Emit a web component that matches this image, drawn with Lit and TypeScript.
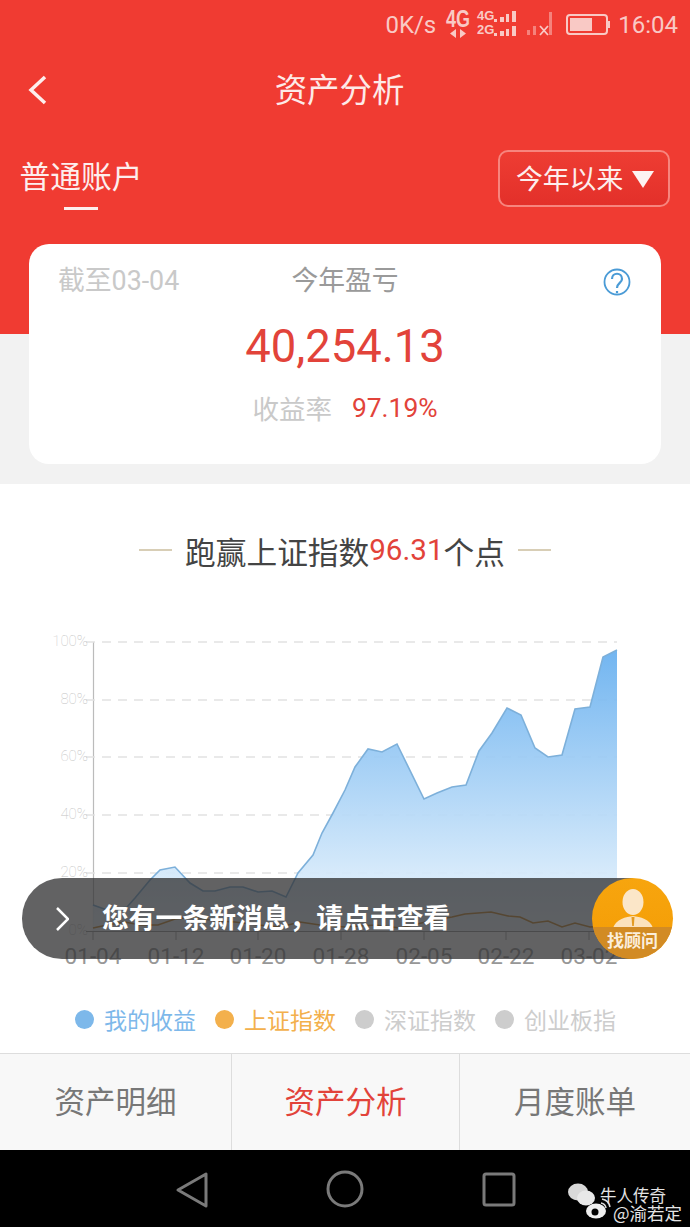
import { LitElement, html, css, svg } from "lit";
import { customElement } from "lit/decorators.js";

const BLUE: [number, number][] = [[93,905],[107,910],[127,907],[135,898],[150,880],[160,870],[175,867],[190,883],[203,891],[215,891],[230,887],[243,887],[258,892],[272,891],[286,897],[298,873],[313,855],[322,833],[333,813],[345,790],[355,767],[368,749],[382,752],[397,744],[424,799],[437,793],[452,787],[466,785],[479,751],[492,733],[507,708],[521,715],[535,748],[548,757],[562,755],[575,709],[590,707],[603,657],[617,650]];
const ORANGE: [number, number][] = [[93,928],[107,925],[125,922],[140,925],[158,925],[175,919],[195,917],[215,921],[235,922],[258,925],[280,927],[300,922],[320,925],[345,927],[375,925],[400,928],[430,921],[452,917],[465,914],[491,912],[508,916],[520,917],[533,923],[548,921],[562,927],[575,923],[590,927],[617,925]];
const pts = (p: [number, number][]) => p.map((q) => q.join(",")).join(" ");
const GRID = [[642,"100%"],[700,"80%"],[757,"60%"],[815,"40%"],[873,"20%"],[931,"0%"]] as [number,string][];
const XT = [[93,"01-04"],[176,"01-12"],[258,"01-20"],[341,"01-28"],[424,"02-05"],[506,"02-22"],[589,"03-02"]] as [number,string][];

@customElement("app-root")
export class AppRoot extends LitElement {
  static styles = css`
    :host { display: block; width: 690px; height: 1227px; overflow: hidden; background: #fff;
      font-family: "Noto Sans CJK SC", "Roboto", sans-serif; }
    .top { height: 484px; background: linear-gradient(#f03b32 334px, #f2f2f2 334px); display: flex; flex-direction: column; }
    .status { height: 50px; display: flex; justify-content: flex-end; align-items: center; padding-right: 12px;
      color: #f9c9c5; font: 24px Roboto, sans-serif; }
    .status span { line-height: 50px; }
    .status svg { display: block; margin: 0 4px 0 5px; }
    .nav { height: 80px; box-sizing: border-box; padding: 0 11px 4px 0; display: flex; align-items: center; justify-content: center; position: relative; color: #fdeae8; font-size: 32.4px; line-height: 76px; }
    .nav svg { position: absolute; left: 28px; top: 24px; }
    .tabs { height: 114px; display: flex; justify-content: space-between; padding: 0 20px 0 20px; box-sizing: border-box; }
    .tab { color: #fdeeed; font-size: 30.8px; line-height: 44px; margin-top: 23px; display: flex; flex-direction: column; align-items: center; width: 122px; height: 60px; white-space: nowrap; }
    .tab i { display: block; width: 34px; height: 3px; background: #fdeeed; margin-top: 10px; }
    .range { width: 172px; height: 57px; margin-top: 20px; box-sizing: border-box; border: 2px solid #f7857e; border-radius: 10px;
      background: linear-gradient(#ee3d33, #e3302a); color: #fdeeed; font-size: 26.8px; display: flex; align-items: center; padding: 0 0 2px 16px; gap: 9px; white-space: nowrap; }
    .range svg { display: block; margin-top: 4px; }
    .card { margin: 0 29px; height: 220px; box-sizing: border-box; background: #fff; border-radius: 20px; padding: 16px 29px 0; display: flex; flex-direction: column; align-items: center; }
    .row1 { width: 100%; position: relative; display: flex; justify-content: center; height: 40px; line-height: 38px; }
    .date { position: absolute; left: 0; color: #c9c9c9; font-size: 26.8px; white-space: nowrap; }
    .date b { font: 26.8px Roboto, sans-serif; }
    .label { color: #9a9a9a; font-size: 26.8px; }
    .q { position: absolute; right: 0; top: 8px; }
    .amount { font: 45.4px Roboto, sans-serif; color: #e2433a; line-height: 56px; margin-top: 19px; }
    .rate { display: flex; align-items: center; gap: 20px; margin-top: 13px; line-height: 40px; }
    .rate span { color: #c9c9c9; font-size: 26.5px; }
    .rate b { font: 26.4px Roboto, sans-serif; color: #e2433a; }
    .main { height: 569px; position: relative; display: flex; flex-direction: column; }
    .heading { height: 136px; display: flex; justify-content: center; align-items: center; gap: 13px; font-size: 30.7px; color: #444; box-sizing: border-box; white-space: nowrap; padding-bottom: 4px; }
    .heading i { display: block; width: 33px; height: 2px; background: #d8ceb6; }
    .heading em { font: 29.6px Roboto, sans-serif; color: #e2433a; }
    .heading div { display: flex; align-items: center; }
    .chart { display: block; }
    .toast { position: absolute; left: 22px; top: 394px; width: 610px; height: 81px; border-radius: 40px 0 0 40px; background: rgba(48,48,50,.76);
      display: flex; align-items: center; color: #fff; font-size: 26.8px; font-weight: 700; padding-left: 33px; box-sizing: border-box; gap: 33px; white-space: nowrap; }
    .toast span { margin-top: -5px; }
    .advisor { position: absolute; left: 592px; top: 394px; width: 81px; height: 81px; border-radius: 50%; background: linear-gradient(#f7a50e, #f49c05); overflow: hidden; }
    .advisor svg { display: block; position: absolute; left: 0; top: 0; }
    .advisor span { position: absolute; left: 0; right: 0; bottom: 0; height: 32px; background: #d28b24; color: #fbeedb; font-size: 17px; font-weight: 700; text-align: center; line-height: 26px; white-space: nowrap; }
    .legend { display: flex; position: absolute; left: 75px; top: 518px; gap: 19px; font-size: 23px; line-height: 34px; white-space: nowrap; }
    .legend div { display: flex; align-items: center; gap: 10px; }
    .legend i { display: block; width: 19px; height: 19px; border-radius: 50%; background: currentColor; flex: none; }
    .bottom { height: 97px; box-sizing: border-box; border-top: 1px solid #ddd; background: #f8f8f8; display: grid; grid-template-columns: 232px 228px 230px; }
    .bottom div { display: flex; align-items: center; justify-content: center; font-size: 30.5px; color: #777; border-right: 1px solid #ddd; padding-bottom: 4px; }
    .bottom div:last-child { border-right: 0; }
    .bottom .on { color: #e2433a; }
    .sys { height: 77px; background: #000; position: relative; display: flex; }
    .sys > svg { display: block; }
    .wm { position: absolute; left: 600px; top: 37px; color: #e4e4e4; font-size: 16.5px; line-height: 17px; white-space: nowrap; }
    .wm div:last-child { margin-left: 13px; font-size: 17.5px; }
  `;

  private chart() {
    return html`<svg class="chart" width="690" height="350" viewBox="0 620 690 350">
      <defs><linearGradient id="g" x1="0" y1="0" x2="0" y2="1">
        <stop offset="0" stop-color="#66afef"/><stop offset="1" stop-color="#eff7fd"/>
      </linearGradient></defs>
      <line x1="93.5" y1="642" x2="93.5" y2="931" stroke="#bbb" stroke-width="1.2"/>
      ${GRID.map(([y, t], i) => svg`
        ${i < 5 ? svg`<line x1="86" y1=${y} x2="617" y2=${y} stroke="#e2e2e2" stroke-width="1.5" stroke-dasharray="9 7"/>` : ""}
        <text x="88" y=${y + 4} text-anchor="end" font-family="Roboto" font-weight="100" font-size="15" fill="#c4c4c4">${t}</text>`)}
      <polygon points="93,931 ${pts(BLUE)} 617,931" fill="url(#g)" opacity=".92"/>
      <polyline points=${pts(BLUE)} fill="none" stroke="#7db0da" stroke-width="1.6"/>
      <polyline points=${pts(ORANGE)} fill="none" stroke="#c78a33" stroke-width="1.6"/>
      <line x1="86" y1="931.5" x2="617" y2="931.5" stroke="#999" stroke-width="1.2"/>
      ${XT.map(([x, t]) => svg`
        <line x1=${x} y1="932" x2=${x} y2="940" stroke="#aaa"/>
        <text x=${x} y="964" text-anchor="middle" font-family="Roboto" font-size="22.5" fill="#979797">${t}</text>`)}
    </svg>`;
  }

  render() {
    return html`
      <div class="top">
        <div class="status">
          <span>0K/s</span>
          <svg width="173" height="50" viewBox="441 0 173 50" fill="#f9c9c5">
            <text x="446" y="27" font-family="Liberation Sans" font-weight="700" font-size="23" textLength="24" lengthAdjust="spacingAndGlyphs">4G</text>
            <path d="M456 29v9l-6-4.500zM460 29v9l6-4.500z"/>
            <text x="477" y="20" font-family="Liberation Sans" font-weight="700" font-size="13">4G</text>
            <text x="477" y="34" font-family="Liberation Sans" font-weight="700" font-size="13">2G</text>
            <path d="M494 19h3v3h-3zM500 17h4v5h-4zM506 14h3v8h-3zM512 11h4v11h-4zM494 33h3v3h-3zM500 31h4v5h-4zM506 29h3v7h-3zM512 26h4v10h-4z"/>
            <path d="M527 30h3v5h-3zM533 26h3v9h-3zM549 12h3v23h-3z" opacity=".5"/>
            <path d="M540 26l8 9M548 26l-8 9" stroke="#f9c9c5" stroke-width="1.8" fill="none"/>
            <rect x="567" y="15" width="40" height="19" rx="3" fill="none" stroke="#f9c9c5" stroke-width="2"/>
            <rect x="570" y="18" width="22" height="13"/>
            <rect x="608" y="21" width="2" height="7"/>
          </svg>
          <span>16:04</span>
        </div>
        <div class="nav">
          <svg width="20" height="32" viewBox="0 0 20 32" fill="none" stroke="#fdeeed" stroke-width="3.500"><path d="M17 3L3 16l14 13"/></svg>
          资产分析
        </div>
        <div class="tabs">
          <div class="tab">普通账户<i></i></div>
          <div class="range">今年以来
            <svg width="22" height="17" viewBox="0 0 22 17"><path d="M0 0h22L11 17z" fill="#fdf3f2"/></svg>
          </div>
        </div>
        <div class="card">
          <div class="row1">
            <div class="date">截至<b>03-04</b></div>
            <div class="label">今年盈亏</div>
            <svg class="q" width="30" height="30" viewBox="0 0 30 30" fill="none" stroke="#4a9bd6" stroke-width="1.800">
              <circle cx="15" cy="14" r="12.500"/>
              <path d="M10 11c0-7 10-7 10 0 0 4-5 4-5 9M15 23v2" stroke-width="2.200"/>
            </svg>
          </div>
          <div class="amount">40,254.13</div>
          <div class="rate"><span>收益率</span><b>97.19%</b></div>
        </div>
      </div>
      <div class="main">
        <div class="heading"><i></i><div>跑赢上证指数<em>96.31</em>个点</div><i></i></div>
        ${this.chart()}
        <div class="toast">
          <svg width="14" height="24" viewBox="0 0 14 24" fill="none" stroke="#fff" stroke-width="2.500"><path d="M2 1l11 11L2 23"/></svg>
          <span>您有一条新消息，请点击查看</span>
        </div>
        <div class="advisor">
          <svg width="81" height="81" viewBox="0 0 81 81">
            <ellipse cx="41" cy="24" rx="10.500" ry="13" fill="#fbe6c8"/>
            <path d="M21 50c3-9 13-11 20-12 7 1 17 3 20 12z" fill="#fbe2bd"/>
            <path d="M39.500 39h3l-.7 9h-1.600z" fill="#e39a22"/>
          </svg>
          <span>找顾问</span>
        </div>
        <div class="legend">
          <div style="color:#7db8ea"><i></i>我的收益</div>
          <div style="color:#f3b04c"><i></i>上证指数</div>
          <div style="color:#cdcdcd"><i></i>深证指数</div>
          <div style="color:#cdcdcd"><i></i>创业板指</div>
        </div>
      </div>
      <div class="bottom">
        <div>资产明细</div>
        <div class="on">资产分析</div>
        <div>月度账单</div>
      </div>
      <div class="sys">
        <svg width="690" height="77" viewBox="0 1150 690 77" fill="none" stroke="#7a7a7a" stroke-width="3">
          <path d="M206 1174v32l-28-16z" stroke-linejoin="round"/>
          <circle cx="345" cy="1189" r="17"/>
          <rect x="484" y="1174" width="30" height="31" rx="2"/>
          <g stroke="none">
            <ellipse cx="578" cy="1192" rx="10" ry="8.500" fill="#d8d8d8"/>
            <ellipse cx="586" cy="1198" rx="9" ry="7.500" fill="#e8e8e8"/>
            <ellipse cx="596" cy="1211" rx="10" ry="7.500" fill="#eee"/>
            <circle cx="595" cy="1212" r="3.500" fill="#000"/>
          </g>
          <path d="M601 1203a6 6 0 0 1 5 5M602 1199a10 10 0 0 1 8 8" stroke="#ddd" stroke-width="1.500"/>
        </svg>
        <div class="wm"><div>牛人传奇</div><div>@渝若定</div></div>
      </div>
    `;
  }
}
